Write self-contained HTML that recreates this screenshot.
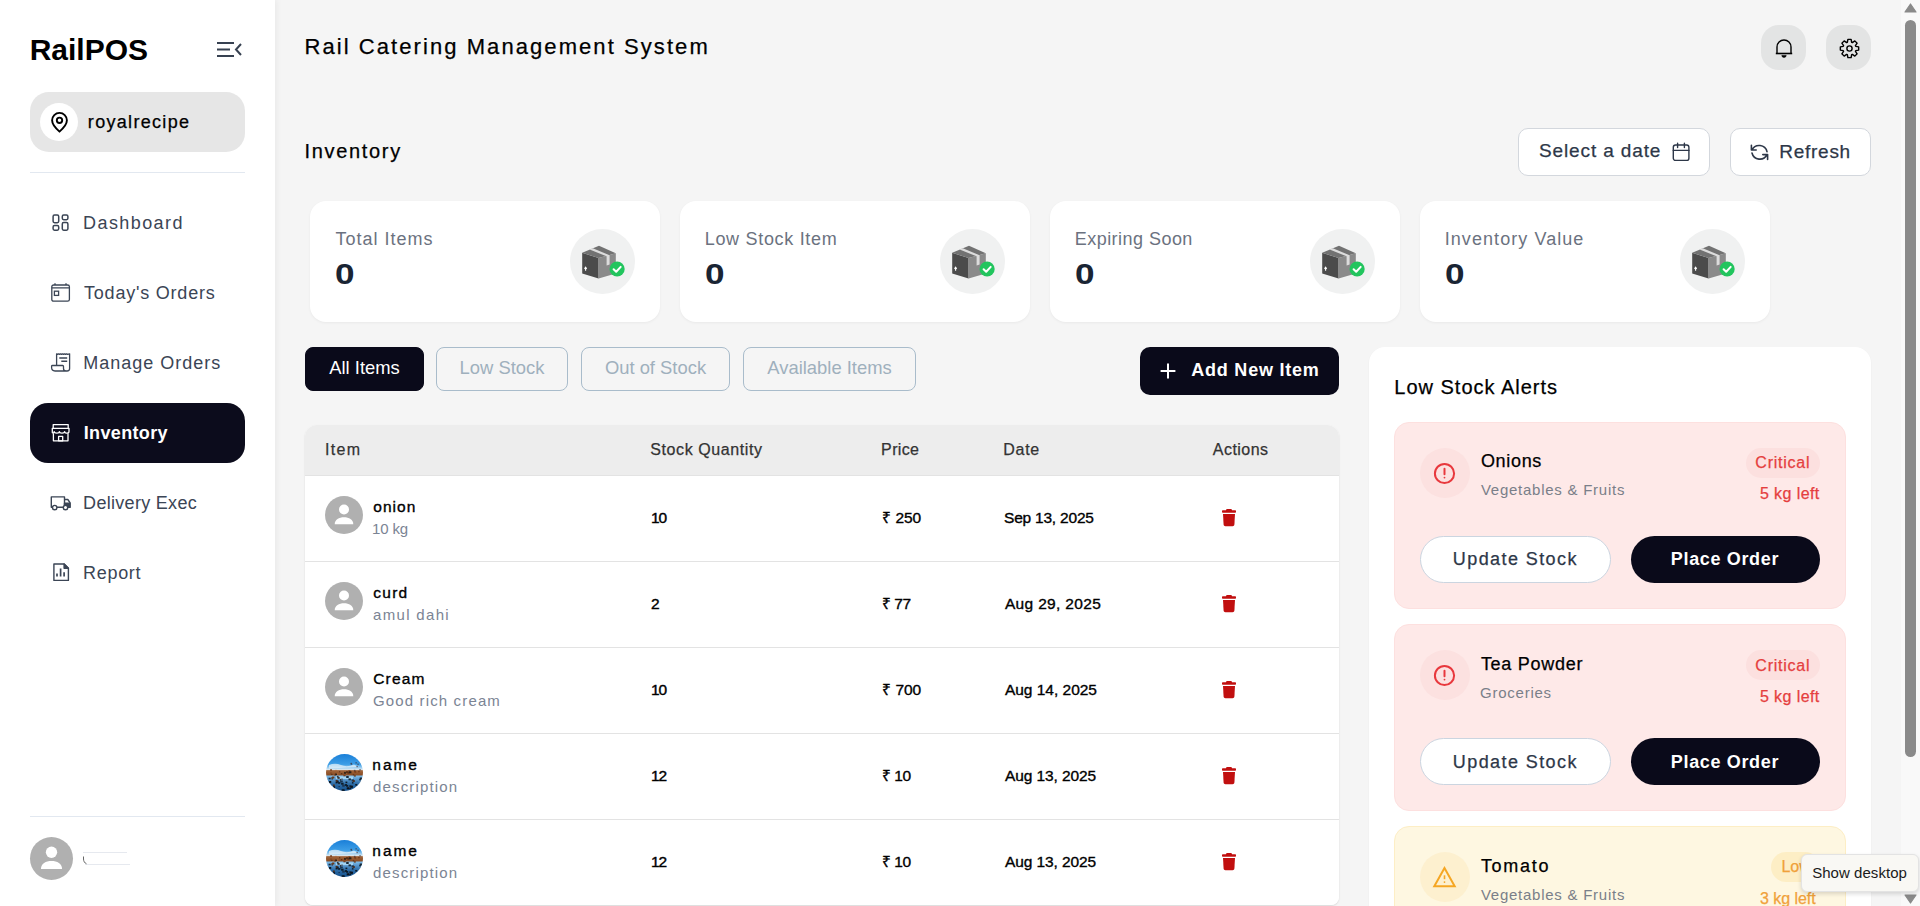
<!DOCTYPE html>
<html><head><meta charset="utf-8"><style>
*{box-sizing:border-box;margin:0;padding:0}
html,body{width:1920px;height:906px;overflow:hidden;background:#f5f5f5;font-family:"Liberation Sans",sans-serif;position:relative}
.abs{position:absolute}
.t{position:absolute;white-space:nowrap;line-height:1}
svg{position:absolute;overflow:visible}
#side{position:absolute;left:0;top:0;width:275px;height:906px;background:#fff;box-shadow:2px 0 6px rgba(0,0,0,0.05)}
.card{position:absolute;top:201px;width:350px;height:121px;background:#fff;border-radius:16px;box-shadow:0 1px 3px rgba(0,0,0,0.05)}
.card .ic{position:absolute;left:260px;top:28px;width:65px;height:65px;border-radius:50%;background:#f0f1f1}
.tab{position:absolute;top:347px;height:44px;border-radius:8px;border:1px solid #a9bccb;color:#9fb0bd;font-size:18.4px;line-height:40px;text-align:center;white-space:nowrap}
.row{position:absolute;left:305px;width:1034px;height:86px;background:#fff;border-top:1px solid #e3e3e3}
.alert{position:absolute;left:1394px;width:452px;height:187px;border-radius:15px}
.ubtn{position:absolute;left:1420px;width:191px;height:47px;border-radius:24px;background:#fff;border:1px solid #cbd5e0}
.pbtn{position:absolute;left:1631px;width:189px;height:47px;border-radius:24px;background:#0a0a1a}
</style></head>
<body>
<div id="side">
<div id="logo" class="t" style="left:29.70px;top:34.86px;font-size:30px;color:#000;font-weight:bold;letter-spacing:0.000px;">RailPOS</div>
<svg style="left:217px;top:41px" width="25" height="17" viewBox="0 0 25 17" fill="none" stroke="#374151" stroke-width="2"><path d="M0 2H17M0 8.5H13M0 15H17M24 3L19 8.5L24 14"/></svg>
<div class="abs" style="left:30px;top:92px;width:215px;height:60px;border-radius:19px;background:#e6e6e6"></div>
<div class="abs" style="left:40px;top:103px;width:38px;height:38px;border-radius:50%;background:#fff"></div>
<svg style="left:50.7px;top:112px" width="17" height="21" viewBox="0 0 17 21" fill="none" stroke="#000" stroke-width="1.9"><path d="M8.5 19.6C8.5 19.6 1.1 13.2 1.1 8.3A7.4 7.4 0 0 1 15.9 8.3C15.9 13.2 8.5 19.6 8.5 19.6Z" stroke-linejoin="miter"/><circle cx="8.5" cy="8.3" r="2.7"/></svg>
<div id="loc" class="t" style="left:87.86px;top:112.76px;font-size:18px;color:#000;font-weight:normal;letter-spacing:1.306px;-webkit-text-stroke:0.25px #000;">royalrecipe</div>
<div class="abs" style="left:30px;top:172px;width:215px;height:1px;background:#e2e8f0"></div>
<svg style="left:52px;top:214px" width="17" height="17" viewBox="0 0 17 17" fill="none" stroke="#3b4555" stroke-width="1.5"><rect x="1.1" y="1.1" width="5.6" height="7.6" rx="1.4"/><rect x="10.3" y="1.1" width="5.6" height="4.6" rx="1.4"/><rect x="1.1" y="11.6" width="5.6" height="4.6" rx="1.4"/><rect x="10.3" y="8.6" width="5.6" height="7.6" rx="1.4"/></svg>
<div id="nav1" class="t" style="left:83.10px;top:214.06px;font-size:18px;color:#3b4555;font-weight:normal;letter-spacing:1.414px;">Dashboard</div>
<svg style="left:51px;top:283px" width="19" height="19" viewBox="0 0 19 19" fill="none" stroke="#3b4555" stroke-width="1.3"><rect x="0.8" y="2" width="17.6" height="16.2" rx="1.8"/><path d="M0.8 4.9H18.4M4 0.2V2M15 0.2V2"/><rect x="3.4" y="8.2" width="4.2" height="4.2"/></svg>
<div id="nav2" class="t" style="left:84.00px;top:283.66px;font-size:18px;color:#3b4555;font-weight:normal;letter-spacing:0.790px;">Today's Orders</div>
<svg style="left:51px;top:353px" width="20" height="19" viewBox="0 0 20 19" fill="none" stroke="#3b4555" stroke-width="1.3" stroke-linejoin="round"><path d="M5.6 12.5V0.8L6.6 1.4L7.6 0.8L8.6 1.4L9.6 0.8L10.6 1.4L11.6 0.8L12.6 1.4L13.6 0.8L14.6 1.4L15.6 0.8L16.6 1.4L18.6 0.8V15.5C18.6 17 17.4 18 16 18H4C2 18 0.6 16.6 0.6 14.6V13.3C0.6 12.8 1 12.5 1.5 12.5H11.6C12.1 12.5 12.5 12.9 12.5 13.4V15.5C12.5 17 13.8 18 15.5 18"/><path d="M8.3 4.9H16.2M10.3 8.3H16.2" stroke-width="1.5"/></svg>
<div id="nav3" class="t" style="left:83.22px;top:353.51px;font-size:18px;color:#3b4555;font-weight:normal;letter-spacing:0.997px;">Manage Orders</div>
<div class="abs" style="left:30px;top:403px;width:215px;height:60px;border-radius:18px;background:#0c0c1c"></div>
<svg style="left:52px;top:424px" width="18" height="18" viewBox="0 0 18 18" fill="none" stroke="#fff" stroke-width="1.3" stroke-linejoin="round"><path d="M1.2 4.3V0.6H16.2V4.3"/><path d="M0.3 4.3H17V7.6C17 8.6 16 9.2 15 9.2C13.8 9.2 12.6 8.4 12.6 7.6C12.6 8.4 11.2 9.2 10 9.2C8.6 9.2 7.4 8.4 7.4 7.6C7.4 8.4 6 9.2 4.8 9.2C3.4 9.2 2.2 8.4 2.2 7.6C2.2 8.6 1.2 9.2 0.3 8.6Z"/><path d="M1.4 9.2V16.8H16V9.2"/><rect x="6.6" y="12.4" width="4.1" height="4.4"/></svg>
<div id="nav4" class="t" style="left:83.77px;top:423.76px;font-size:18px;color:#fff;font-weight:bold;letter-spacing:0.337px;">Inventory</div>
<svg style="left:50px;top:496px" width="21" height="15" viewBox="0 0 21 15" fill="none" stroke="#3b4555" stroke-width="1.4" stroke-linejoin="round"><path d="M1.3 11.2V0.9H14.5V11.2H1.3Z"/><path d="M14.5 3.5H17.8L20 6.6V11.2H14.5"/><rect x="14.5" y="7.2" width="5.5" height="4" fill="#3b4555"/><circle cx="4.7" cy="11.6" r="2.2" fill="#fff"/><circle cx="15.5" cy="11.6" r="2.2" fill="#fff"/></svg>
<div id="nav5" class="t" style="left:83.10px;top:494.06px;font-size:18px;color:#3b4555;font-weight:normal;letter-spacing:0.300px;">Delivery Exec</div>
<svg style="left:52px;top:563px" width="18" height="19" viewBox="0 0 18 19" fill="none" stroke="#3b4555" stroke-width="1.4" stroke-linejoin="round"><path d="M1.9 1H12.1L16.4 5.2V17.4H1.9Z"/><path d="M12.1 1V5.2H16.4Z" fill="#3b4555"/><path d="M5 10.5V13.5M8.6 5.5V13.5M12.1 9.3V13.5" stroke-width="1.7"/></svg>
<div id="nav6" class="t" style="left:83.10px;top:564.16px;font-size:18px;color:#3b4555;font-weight:normal;letter-spacing:0.684px;">Report</div>
<div class="abs" style="left:30px;top:816px;width:215px;height:1px;background:#e2e8f0"></div>
<svg style="left:30px;top:837px" width="43" height="43" viewBox="0 0 38 38">
<circle cx="19" cy="19" r="19" fill="#b0b0b0"/>
<circle cx="19" cy="13.5" r="5" fill="#fff"/>
<path d="M9.7 28.2C9.7 23.5 14 21.2 19 21.2C24 21.2 28.3 23.5 28.3 28.2Z" fill="#fff"/>
</svg>
<div class="abs" style="left:83px;top:852px;width:44px;height:1px;background:#e6e9ef"></div>
<div class="abs" style="left:85px;top:864px;width:45px;height:1px;background:#e6e9ef"></div>
<svg style="left:82px;top:855px" width="6" height="10" viewBox="0 0 6 10" fill="none" stroke="#666" stroke-width="1"><path d="M1.5 1.5V4C1.5 6 2.5 8 4.5 8.8"/></svg>
</div>
<div id="title" class="t" style="left:304.46px;top:35.78px;font-size:22px;color:#000;font-weight:normal;letter-spacing:2.070px;-webkit-text-stroke:0.25px #000;">Rail Catering Management System</div>
<div class="abs" style="left:1761px;top:25px;width:45px;height:45px;border-radius:18px;background:#e3e4e4"></div>
<div class="abs" style="left:1826px;top:25px;width:45px;height:45px;border-radius:18px;background:#e3e4e4"></div>
<svg style="left:1775px;top:39px" width="18" height="19" viewBox="0 0 18 19" fill="none" stroke="#000" stroke-width="1.4"><path d="M2 14.5V8A7 7 0 0 1 16 8V14.5"/><path d="M0.8 14.5H17.2" stroke-width="1.6"/><path d="M6.8 16.4A2.2 2 0 0 0 11.2 16.4Z" fill="#000" stroke-width="0.6"/></svg>
<svg style="left:1838.5px;top:37.5px" width="21" height="21" viewBox="0 0 21 21" fill="none" stroke="#000" stroke-width="1.4" stroke-linejoin="round"><path d="M8.35 4.26 L8.89 1.34 L12.11 1.34 L12.65 4.26 L13.39 4.57 L15.83 2.88 L18.12 5.17 L16.43 7.61 L16.74 8.35 L19.66 8.89 L19.66 12.11 L16.74 12.65 L16.43 13.39 L18.12 15.83 L15.83 18.12 L13.39 16.43 L12.65 16.74 L12.11 19.66 L8.89 19.66 L8.35 16.74 L7.61 16.43 L5.17 18.12 L2.88 15.83 L4.57 13.39 L4.26 12.65 L1.34 12.11 L1.34 8.89 L4.26 8.35 L4.57 7.61 L2.88 5.17 L5.17 2.88 L7.61 4.57Z"/><circle cx="10.5" cy="10.5" r="2.6"/></svg>
<div id="invh" class="t" style="left:304.46px;top:140.97px;font-size:20px;color:#000;font-weight:normal;letter-spacing:1.688px;-webkit-text-stroke:0.25px #000;">Inventory</div>
<div class="abs" style="left:1518px;top:128px;width:192px;height:48px;border-radius:10px;background:#fff;border:1px solid #d3d7dd"></div>
<div id="seld" class="t" style="left:1539.00px;top:141.32px;font-size:19px;color:#2d3748;font-weight:normal;letter-spacing:0.877px;-webkit-text-stroke:0.25px #2d3748;">Select a date</div>
<svg style="left:1672px;top:143px" width="18" height="19" viewBox="0 0 18 19" fill="none" stroke="#2d3748" stroke-width="1.4"><rect x="1.3" y="2" width="15.6" height="15.4" rx="2.2"/><path d="M1.3 7.4H16.9M5.6 0.3V4.5M12.4 0.3V4.5" stroke-linecap="round"/></svg>
<div class="abs" style="left:1730px;top:128px;width:141px;height:48px;border-radius:10px;background:#fff;border:1px solid #d3d7dd"></div>
<svg style="left:1750px;top:143px" width="19" height="19" viewBox="0 0 19 19" fill="none" stroke="#2d3748" stroke-width="1.6" stroke-linecap="round" stroke-linejoin="round"><path d="M1.4 2.2V7H6.2M2 7A8 8 0 0 1 17 8.6M17.6 16.4V11.6H12.8M17 11.6A8 8 0 0 1 2 10"/></svg>
<div id="refr" class="t" style="left:1779.34px;top:141.52px;font-size:19px;color:#2d3748;font-weight:normal;letter-spacing:0.720px;-webkit-text-stroke:0.25px #2d3748;">Refresh</div>
<div class="card" style="left:310px"><div class="ic"></div></div>
<div id="lb0" class="t" style="left:335.62px;top:229.86px;font-size:18px;color:#6b7280;font-weight:normal;letter-spacing:0.990px;">Total Items</div>
<div id="val0" class="t" style="left:334.72px;top:259.21px;font-size:30px;color:#1a2433;font-weight:bold;letter-spacing:0.000px;transform:scaleX(1.17);transform-origin:0 0;">0</div>
<svg style="left:581.9px;top:244.39999999999998px" width="44" height="34" viewBox="0 0 44 34">
<polygon points="0.2,8.8 16.6,14.1 16.6,34.5 0.2,29.4" fill="#4b4b4b"/>
<polygon points="16.6,14.1 33.8,9.3 33.8,29.6 16.6,34.5" fill="#8a8a8a"/>
<polygon points="0.2,8.8 17,1.8 33.8,9.3 16.6,14.1" fill="#727272"/>
<polygon points="7.6,5.6 10.8,4.3 27.6,11.2 27.6,20.5 24.6,21.5 24.6,12.3" fill="#dcdcdc"/>
<path d="M3.6 26.8V23.5M2.5 24.8L3.6 23.3L4.7 24.8" stroke="#fff" stroke-width="1.1" fill="none"/>
<circle cx="35.1" cy="25" r="7.6" fill="#22c55e"/>
<path d="M31.6 25.2L34.2 27.7L38.7 22.9" stroke="#fff" stroke-width="2" fill="none" stroke-linecap="round" stroke-linejoin="round"/>
</svg>
<div class="card" style="left:680px"><div class="ic"></div></div>
<div id="lb1" class="t" style="left:704.72px;top:229.86px;font-size:18px;color:#6b7280;font-weight:normal;letter-spacing:0.692px;">Low Stock Item</div>
<div id="val1" class="t" style="left:704.72px;top:259.21px;font-size:30px;color:#1a2433;font-weight:bold;letter-spacing:0.000px;transform:scaleX(1.17);transform-origin:0 0;">0</div>
<svg style="left:951.9px;top:244.39999999999998px" width="44" height="34" viewBox="0 0 44 34">
<polygon points="0.2,8.8 16.6,14.1 16.6,34.5 0.2,29.4" fill="#4b4b4b"/>
<polygon points="16.6,14.1 33.8,9.3 33.8,29.6 16.6,34.5" fill="#8a8a8a"/>
<polygon points="0.2,8.8 17,1.8 33.8,9.3 16.6,14.1" fill="#727272"/>
<polygon points="7.6,5.6 10.8,4.3 27.6,11.2 27.6,20.5 24.6,21.5 24.6,12.3" fill="#dcdcdc"/>
<path d="M3.6 26.8V23.5M2.5 24.8L3.6 23.3L4.7 24.8" stroke="#fff" stroke-width="1.1" fill="none"/>
<circle cx="35.1" cy="25" r="7.6" fill="#22c55e"/>
<path d="M31.6 25.2L34.2 27.7L38.7 22.9" stroke="#fff" stroke-width="2" fill="none" stroke-linecap="round" stroke-linejoin="round"/>
</svg>
<div class="card" style="left:1050px"><div class="ic"></div></div>
<div id="lb2" class="t" style="left:1074.72px;top:229.86px;font-size:18px;color:#6b7280;font-weight:normal;letter-spacing:0.465px;">Expiring Soon</div>
<div id="val2" class="t" style="left:1074.72px;top:259.21px;font-size:30px;color:#1a2433;font-weight:bold;letter-spacing:0.000px;transform:scaleX(1.17);transform-origin:0 0;">0</div>
<svg style="left:1321.9px;top:244.39999999999998px" width="44" height="34" viewBox="0 0 44 34">
<polygon points="0.2,8.8 16.6,14.1 16.6,34.5 0.2,29.4" fill="#4b4b4b"/>
<polygon points="16.6,14.1 33.8,9.3 33.8,29.6 16.6,34.5" fill="#8a8a8a"/>
<polygon points="0.2,8.8 17,1.8 33.8,9.3 16.6,14.1" fill="#727272"/>
<polygon points="7.6,5.6 10.8,4.3 27.6,11.2 27.6,20.5 24.6,21.5 24.6,12.3" fill="#dcdcdc"/>
<path d="M3.6 26.8V23.5M2.5 24.8L3.6 23.3L4.7 24.8" stroke="#fff" stroke-width="1.1" fill="none"/>
<circle cx="35.1" cy="25" r="7.6" fill="#22c55e"/>
<path d="M31.6 25.2L34.2 27.7L38.7 22.9" stroke="#fff" stroke-width="2" fill="none" stroke-linecap="round" stroke-linejoin="round"/>
</svg>
<div class="card" style="left:1420px"><div class="ic"></div></div>
<div id="lb3" class="t" style="left:1444.72px;top:229.86px;font-size:18px;color:#6b7280;font-weight:normal;letter-spacing:1.064px;">Inventory Value</div>
<div id="val3" class="t" style="left:1444.72px;top:259.21px;font-size:30px;color:#1a2433;font-weight:bold;letter-spacing:0.000px;transform:scaleX(1.17);transform-origin:0 0;">0</div>
<svg style="left:1691.9px;top:244.39999999999998px" width="44" height="34" viewBox="0 0 44 34">
<polygon points="0.2,8.8 16.6,14.1 16.6,34.5 0.2,29.4" fill="#4b4b4b"/>
<polygon points="16.6,14.1 33.8,9.3 33.8,29.6 16.6,34.5" fill="#8a8a8a"/>
<polygon points="0.2,8.8 17,1.8 33.8,9.3 16.6,14.1" fill="#727272"/>
<polygon points="7.6,5.6 10.8,4.3 27.6,11.2 27.6,20.5 24.6,21.5 24.6,12.3" fill="#dcdcdc"/>
<path d="M3.6 26.8V23.5M2.5 24.8L3.6 23.3L4.7 24.8" stroke="#fff" stroke-width="1.1" fill="none"/>
<circle cx="35.1" cy="25" r="7.6" fill="#22c55e"/>
<path d="M31.6 25.2L34.2 27.7L38.7 22.9" stroke="#fff" stroke-width="2" fill="none" stroke-linecap="round" stroke-linejoin="round"/>
</svg>
<div class="tab" style="left:305px;width:119px;background:#0a0a1a;border-color:#0a0a1a;color:#fff">All Items</div>
<div class="tab" style="left:436px;width:132px">Low Stock</div>
<div class="tab" style="left:581px;width:149px">Out of Stock</div>
<div class="tab" style="left:743px;width:173px">Available Items</div>
<div class="abs" style="left:1140px;top:347px;width:199px;height:48px;border-radius:10px;background:#0a0a1a"></div>
<svg style="left:1160px;top:363px" width="16" height="16" viewBox="0 0 16 16" stroke="#fff" stroke-width="2"><path d="M8 0.6V15.4M0.6 8H15.4"/></svg>
<div id="addn" class="t" style="left:1191.26px;top:360.86px;font-size:18px;color:#fff;font-weight:bold;letter-spacing:0.783px;">Add New Item</div>
<div class="abs" style="left:305px;top:425px;width:1034px;height:480px;border-radius:12px 12px 8px 8px;background:#fff;overflow:hidden;box-shadow:0 1px 2px rgba(0,0,0,0.12)"><div class="abs" style="left:0;top:0;width:1034px;height:50px;background:#ededed"></div></div>
<div id="h0" class="t" style="left:325.12px;top:441.66px;font-size:16px;color:#333;font-weight:normal;letter-spacing:1.260px;-webkit-text-stroke:0.25px #333;">Item</div>
<div id="h1" class="t" style="left:650.24px;top:441.66px;font-size:16px;color:#333;font-weight:normal;letter-spacing:0.597px;-webkit-text-stroke:0.25px #333;">Stock Quantity</div>
<div id="h2" class="t" style="left:881.10px;top:441.66px;font-size:16px;color:#333;font-weight:normal;letter-spacing:0.360px;-webkit-text-stroke:0.25px #333;">Price</div>
<div id="h3" class="t" style="left:1003.36px;top:441.66px;font-size:16px;color:#333;font-weight:normal;letter-spacing:0.660px;-webkit-text-stroke:0.25px #333;">Date</div>
<div id="h4" class="t" style="left:1212.76px;top:441.66px;font-size:16px;color:#333;font-weight:normal;letter-spacing:0.480px;-webkit-text-stroke:0.25px #333;">Actions</div>
<div class="row" style="top:475px;"></div>
<svg style="left:325px;top:496px" width="38" height="38" viewBox="0 0 38 38">
<circle cx="19" cy="19" r="19" fill="#b0b0b0"/>
<circle cx="19" cy="13.5" r="5" fill="#fff"/>
<path d="M9.7 28.2C9.7 23.5 14 21.2 19 21.2C24 21.2 28.3 23.5 28.3 28.2Z" fill="#fff"/>
</svg>
<div id="r0n" class="t" style="left:373.26px;top:498.78px;font-size:15.5px;color:#000;font-weight:normal;letter-spacing:1.043px;-webkit-text-stroke:0.35px #000;">onion</div>
<div id="r0d" class="t" style="left:372.10px;top:521.10px;font-size:15px;color:#7b8494;font-weight:normal;letter-spacing:-0.180px;">10 kg</div>
<div id="r0q" class="t" style="left:651.00px;top:509.88px;font-size:15.5px;color:#000;font-weight:normal;letter-spacing:-1.000px;-webkit-text-stroke:0.4px #000;">10</div>
<div id="r0p" class="t" style="left:882.26px;top:509.88px;font-size:15.5px;color:#000;font-weight:normal;letter-spacing:-0.086px;-webkit-text-stroke:0.35px #000;">&#8377; 250</div>
<div id="r0t" class="t" style="left:1004.00px;top:509.88px;font-size:15.5px;color:#000;font-weight:normal;letter-spacing:-0.210px;-webkit-text-stroke:0.35px #000;">Sep 13, 2025</div>
<svg style="left:1222px;top:509px" width="14" height="18" viewBox="0 0 14 18">
<path d="M4.3 0.4C4.5 0 4.9 0 5.2 0H8.8C9.1 0 9.5 0 9.7 0.4L10.1 1.2H13.3C13.7 1.2 14 1.5 14 2V3.1C14 3.5 13.7 3.8 13.3 3.8H0.7C0.3 3.8 0 3.5 0 3.1V2C0 1.5 0.3 1.2 0.7 1.2H3.9Z" fill="#c10f0f"/>
<path d="M1 4.9H13L12.4 15.6C12.3 16.6 11.6 17.3 10.6 17.3H3.4C2.4 17.3 1.7 16.6 1.6 15.6Z" fill="#c10f0f"/>
</svg>
<div class="row" style="top:561px;"></div>
<svg style="left:325px;top:582px" width="38" height="38" viewBox="0 0 38 38">
<circle cx="19" cy="19" r="19" fill="#b0b0b0"/>
<circle cx="19" cy="13.5" r="5" fill="#fff"/>
<path d="M9.7 28.2C9.7 23.5 14 21.2 19 21.2C24 21.2 28.3 23.5 28.3 28.2Z" fill="#fff"/>
</svg>
<div id="r1n" class="t" style="left:373.26px;top:584.78px;font-size:15.5px;color:#000;font-weight:normal;letter-spacing:1.260px;-webkit-text-stroke:0.35px #000;">curd</div>
<div id="r1d" class="t" style="left:373.00px;top:607.10px;font-size:15px;color:#7b8494;font-weight:normal;letter-spacing:1.329px;">amul dahi</div>
<div id="r1q" class="t" style="left:651.00px;top:595.88px;font-size:15.5px;color:#000;font-weight:normal;letter-spacing:0.000px;-webkit-text-stroke:0.4px #000;">2</div>
<div id="r1p" class="t" style="left:882.26px;top:595.88px;font-size:15.5px;color:#000;font-weight:normal;letter-spacing:-0.600px;-webkit-text-stroke:0.35px #000;">&#8377; 77</div>
<div id="r1t" class="t" style="left:1004.90px;top:595.88px;font-size:15.5px;color:#000;font-weight:normal;letter-spacing:0.338px;-webkit-text-stroke:0.35px #000;">Aug 29, 2025</div>
<svg style="left:1222px;top:595px" width="14" height="18" viewBox="0 0 14 18">
<path d="M4.3 0.4C4.5 0 4.9 0 5.2 0H8.8C9.1 0 9.5 0 9.7 0.4L10.1 1.2H13.3C13.7 1.2 14 1.5 14 2V3.1C14 3.5 13.7 3.8 13.3 3.8H0.7C0.3 3.8 0 3.5 0 3.1V2C0 1.5 0.3 1.2 0.7 1.2H3.9Z" fill="#c10f0f"/>
<path d="M1 4.9H13L12.4 15.6C12.3 16.6 11.6 17.3 10.6 17.3H3.4C2.4 17.3 1.7 16.6 1.6 15.6Z" fill="#c10f0f"/>
</svg>
<div class="row" style="top:647px;"></div>
<svg style="left:325px;top:668px" width="38" height="38" viewBox="0 0 38 38">
<circle cx="19" cy="19" r="19" fill="#b0b0b0"/>
<circle cx="19" cy="13.5" r="5" fill="#fff"/>
<path d="M9.7 28.2C9.7 23.5 14 21.2 19 21.2C24 21.2 28.3 23.5 28.3 28.2Z" fill="#fff"/>
</svg>
<div id="r2n" class="t" style="left:373.26px;top:670.78px;font-size:15.5px;color:#000;font-weight:normal;letter-spacing:1.178px;-webkit-text-stroke:0.35px #000;">Cream</div>
<div id="r2d" class="t" style="left:373.00px;top:693.10px;font-size:15px;color:#7b8494;font-weight:normal;letter-spacing:1.142px;">Good rich cream</div>
<div id="r2q" class="t" style="left:651.00px;top:681.88px;font-size:15.5px;color:#000;font-weight:normal;letter-spacing:-1.000px;-webkit-text-stroke:0.4px #000;">10</div>
<div id="r2p" class="t" style="left:882.26px;top:681.88px;font-size:15.5px;color:#000;font-weight:normal;letter-spacing:-0.090px;-webkit-text-stroke:0.35px #000;">&#8377; 700</div>
<div id="r2t" class="t" style="left:1004.90px;top:681.88px;font-size:15.5px;color:#000;font-weight:normal;letter-spacing:-0.011px;-webkit-text-stroke:0.35px #000;">Aug 14, 2025</div>
<svg style="left:1222px;top:681px" width="14" height="18" viewBox="0 0 14 18">
<path d="M4.3 0.4C4.5 0 4.9 0 5.2 0H8.8C9.1 0 9.5 0 9.7 0.4L10.1 1.2H13.3C13.7 1.2 14 1.5 14 2V3.1C14 3.5 13.7 3.8 13.3 3.8H0.7C0.3 3.8 0 3.5 0 3.1V2C0 1.5 0.3 1.2 0.7 1.2H3.9Z" fill="#c10f0f"/>
<path d="M1 4.9H13L12.4 15.6C12.3 16.6 11.6 17.3 10.6 17.3H3.4C2.4 17.3 1.7 16.6 1.6 15.6Z" fill="#c10f0f"/>
</svg>
<div class="row" style="top:733px;"></div>
<svg style="left:325.5px;top:754px" width="37" height="37" viewBox="0 0 37 37">
<defs><clipPath id="cp754"><circle cx="18.5" cy="18.5" r="18.5"/></clipPath>
<linearGradient id="sk754" x1="0" y1="0" x2="0" y2="1">
<stop offset="0" stop-color="#1a7fd8"/><stop offset="0.28" stop-color="#3d9ee6"/><stop offset="0.38" stop-color="#a9d4f2"/><stop offset="0.42" stop-color="#d8e6ee"/>
<stop offset="0.45" stop-color="#a0643a"/><stop offset="0.56" stop-color="#8a4e26"/><stop offset="0.6" stop-color="#7ab8e6"/><stop offset="0.68" stop-color="#5b9ad0"/>
<stop offset="0.8" stop-color="#2f6ea8"/><stop offset="1" stop-color="#15508c"/></linearGradient></defs>
<g clip-path="url(#cp754)"><rect width="37" height="37" fill="url(#sk754)"/>
<path d="M3 11Q9 8.5 15 11T28 10.5L33 13L3 14.5Z" fill="#e6f1f8" opacity="0.75"/>
<rect x="10" y="22.5" width="17" height="2.6" fill="#a8d8f6" opacity="0.9"/>
<rect x="13.0" y="17.3" width="1.3" height="1.0" fill="#5a2e14"/><rect x="20.2" y="22.0" width="2.5" height="2.0" fill="#1a2a38"/><rect x="9.3" y="15.9" width="1.3" height="1.0" fill="#b06a3a"/><rect x="5.1" y="23.3" width="1.4" height="1.1" fill="#6a3a1a"/><rect x="9.6" y="27.8" width="2.0" height="1.6" fill="#0e1c2a"/><rect x="15.5" y="35.5" width="2.0" height="1.6" fill="#0e1c2a"/><rect x="6.5" y="23.2" width="1.4" height="1.1" fill="#6a3a1a"/><rect x="12.5" y="32.0" width="1.3" height="1.1" fill="#1b3550"/><rect x="21.4" y="18.1" width="2.0" height="1.6" fill="#5a2e14"/><rect x="4.1" y="15.3" width="1.9" height="1.5" fill="#7a3f1c"/><rect x="20.1" y="31.1" width="2.0" height="1.6" fill="#0a1420"/><rect x="17.4" y="20.6" width="2.2" height="1.7" fill="#7a3f1c"/><rect x="10.3" y="26.6" width="2.4" height="1.9" fill="#0a1420"/><rect x="26.8" y="20.3" width="1.4" height="1.1" fill="#5a2e14"/><rect x="16.2" y="30.7" width="2.5" height="2.0" fill="#1b3550"/><rect x="16.3" y="35.2" width="2.3" height="1.8" fill="#0e1c2a"/><rect x="21.5" y="33.3" width="1.7" height="1.3" fill="#4a2e1e"/><rect x="13.9" y="24.9" width="1.3" height="1.0" fill="#3a2a20"/><rect x="5.2" y="19.9" width="1.3" height="1.0" fill="#5a2e14"/><rect x="25.9" y="28.2" width="1.6" height="1.3" fill="#0a1420"/><rect x="15.1" y="28.7" width="2.5" height="2.0" fill="#0e1c2a"/><rect x="14.1" y="27.4" width="1.3" height="1.0" fill="#0a1420"/><rect x="28.1" y="16.8" width="1.8" height="1.4" fill="#7a3f1c"/><rect x="33.2" y="24.9" width="1.8" height="1.5" fill="#1a2a38"/><rect x="20.7" y="33.4" width="2.4" height="1.9" fill="#0a1420"/><rect x="11.5" y="23.1" width="2.2" height="1.7" fill="#3a2a20"/><rect x="14.9" y="19.1" width="1.4" height="1.2" fill="#5a2e14"/><rect x="9.9" y="19.1" width="2.4" height="1.9" fill="#b06a3a"/><rect x="8.2" y="20.2" width="1.8" height="1.4" fill="#7a3f1c"/><rect x="14.6" y="26.5" width="2.2" height="1.7" fill="#1b3550"/><rect x="19.5" y="27.6" width="1.8" height="1.5" fill="#0e1c2a"/><rect x="31.6" y="34.9" width="1.8" height="1.4" fill="#0a1420"/><rect x="15.4" y="24.6" width="1.3" height="1.0" fill="#3a2a20"/><rect x="4.3" y="18.6" width="1.4" height="1.1" fill="#7a3f1c"/><rect x="22.4" y="16.3" width="2.0" height="1.6" fill="#7a3f1c"/><rect x="34.3" y="27.5" width="2.4" height="1.9" fill="#0e1c2a"/><rect x="22.9" y="17.3" width="2.5" height="2.0" fill="#2b2218"/><rect x="22.5" y="24.4" width="2.4" height="1.9" fill="#1a2a38"/><rect x="35.8" y="24.3" width="1.6" height="1.3" fill="#3a2a20"/><rect x="6.9" y="30.5" width="1.9" height="1.5" fill="#4a2e1e"/><rect x="25.5" y="25.4" width="2.5" height="2.0" fill="#1b3550"/><rect x="20.0" y="17.2" width="2.3" height="1.8" fill="#5a2e14"/><rect x="12.1" y="28.1" width="2.2" height="1.7" fill="#0e1c2a"/><rect x="10.9" y="22.1" width="1.7" height="1.4" fill="#1a2a38"/><rect x="9.6" y="25.9" width="2.1" height="1.7" fill="#4a2e1e"/><rect x="22.8" y="31.3" width="2.3" height="1.9" fill="#1b3550"/><rect x="29.8" y="30.3" width="1.5" height="1.2" fill="#1b3550"/><rect x="18.8" y="30.1" width="2.3" height="1.8" fill="#0e1c2a"/><rect x="18.1" y="18.3" width="1.8" height="1.5" fill="#2b2218"/><rect x="33.9" y="35.7" width="1.3" height="1.1" fill="#4a2e1e"/><rect x="5.5" y="24.3" width="1.5" height="1.2" fill="#3a2a20"/><rect x="23.2" y="33.8" width="1.9" height="1.5" fill="#0e1c2a"/><rect x="24.2" y="31.6" width="2.4" height="1.9" fill="#0e1c2a"/><rect x="6.1" y="22.5" width="2.3" height="1.8" fill="#6a3a1a"/><rect x="18.3" y="17.9" width="1.3" height="1.1" fill="#2b2218"/><rect x="34.2" y="29.9" width="1.8" height="1.4" fill="#0a1420"/><rect x="34.2" y="29.9" width="2.6" height="2.1" fill="#1b3550"/><rect x="2.9" y="27.0" width="2.3" height="1.9" fill="#0a1420"/><rect x="7.0" y="32.2" width="2.1" height="1.7" fill="#0a1420"/><rect x="13.9" y="26.1" width="1.2" height="1.0" fill="#1b3550"/><rect x="29.2" y="30.0" width="1.9" height="1.5" fill="#0e1c2a"/><rect x="33.7" y="23.5" width="2.4" height="1.9" fill="#1a2a38"/><rect x="9.2" y="19.5" width="1.9" height="1.5" fill="#2b2218"/><rect x="28.0" y="21.2" width="1.8" height="1.4" fill="#6a3a1a"/><rect x="6.5" y="34.0" width="2.5" height="2.0" fill="#4a2e1e"/><rect x="24.5" y="31.9" width="2.4" height="1.9" fill="#0a1420"/><rect x="31.9" y="16.9" width="1.9" height="1.5" fill="#7a3f1c"/><rect x="2.6" y="23.7" width="2.1" height="1.6" fill="#1a2a38"/><rect x="28.4" y="17.3" width="1.9" height="1.5" fill="#7a3f1c"/><rect x="26.7" y="26.2" width="2.2" height="1.7" fill="#4a2e1e"/><rect x="30.4" y="11.9" width="1.5" height="1.3" fill="#3a3a4a" opacity="0.7"/><rect x="33.3" y="15.1" width="1.5" height="1.3" fill="#3a3a4a" opacity="0.7"/><rect x="24.7" y="9.5" width="1.5" height="1.3" fill="#3a3a4a" opacity="0.7"/><rect x="24.5" y="8.8" width="1.5" height="1.3" fill="#3a3a4a" opacity="0.7"/><rect x="29.4" y="8.2" width="1.5" height="1.3" fill="#3a3a4a" opacity="0.7"/><rect x="34.7" y="8.5" width="1.5" height="1.3" fill="#3a3a4a" opacity="0.7"/><rect x="27.9" y="15.8" width="1.5" height="1.3" fill="#3a3a4a" opacity="0.7"/><rect x="31.3" y="9.6" width="1.5" height="1.3" fill="#3a3a4a" opacity="0.7"/>
</g></svg>
<div id="r3n" class="t" style="left:372.36px;top:756.78px;font-size:15.5px;color:#000;font-weight:normal;letter-spacing:1.920px;-webkit-text-stroke:0.35px #000;">name</div>
<div id="r3d" class="t" style="left:373.00px;top:779.10px;font-size:15px;color:#7b8494;font-weight:normal;letter-spacing:1.162px;">description</div>
<div id="r3q" class="t" style="left:651.00px;top:767.88px;font-size:15.5px;color:#000;font-weight:normal;letter-spacing:-1.000px;-webkit-text-stroke:0.4px #000;">12</div>
<div id="r3p" class="t" style="left:882.26px;top:767.88px;font-size:15.5px;color:#000;font-weight:normal;letter-spacing:-0.600px;-webkit-text-stroke:0.35px #000;">&#8377; 10</div>
<div id="r3t" class="t" style="left:1004.90px;top:767.88px;font-size:15.5px;color:#000;font-weight:normal;letter-spacing:-0.081px;-webkit-text-stroke:0.35px #000;">Aug 13, 2025</div>
<svg style="left:1222px;top:767px" width="14" height="18" viewBox="0 0 14 18">
<path d="M4.3 0.4C4.5 0 4.9 0 5.2 0H8.8C9.1 0 9.5 0 9.7 0.4L10.1 1.2H13.3C13.7 1.2 14 1.5 14 2V3.1C14 3.5 13.7 3.8 13.3 3.8H0.7C0.3 3.8 0 3.5 0 3.1V2C0 1.5 0.3 1.2 0.7 1.2H3.9Z" fill="#c10f0f"/>
<path d="M1 4.9H13L12.4 15.6C12.3 16.6 11.6 17.3 10.6 17.3H3.4C2.4 17.3 1.7 16.6 1.6 15.6Z" fill="#c10f0f"/>
</svg>
<div class="row" style="top:819px;border-radius:0 0 8px 8px;"></div>
<svg style="left:325.5px;top:840px" width="37" height="37" viewBox="0 0 37 37">
<defs><clipPath id="cp840"><circle cx="18.5" cy="18.5" r="18.5"/></clipPath>
<linearGradient id="sk840" x1="0" y1="0" x2="0" y2="1">
<stop offset="0" stop-color="#1a7fd8"/><stop offset="0.28" stop-color="#3d9ee6"/><stop offset="0.38" stop-color="#a9d4f2"/><stop offset="0.42" stop-color="#d8e6ee"/>
<stop offset="0.45" stop-color="#a0643a"/><stop offset="0.56" stop-color="#8a4e26"/><stop offset="0.6" stop-color="#7ab8e6"/><stop offset="0.68" stop-color="#5b9ad0"/>
<stop offset="0.8" stop-color="#2f6ea8"/><stop offset="1" stop-color="#15508c"/></linearGradient></defs>
<g clip-path="url(#cp840)"><rect width="37" height="37" fill="url(#sk840)"/>
<path d="M3 11Q9 8.5 15 11T28 10.5L33 13L3 14.5Z" fill="#e6f1f8" opacity="0.75"/>
<rect x="10" y="22.5" width="17" height="2.6" fill="#a8d8f6" opacity="0.9"/>
<rect x="13.0" y="17.3" width="1.3" height="1.0" fill="#5a2e14"/><rect x="20.2" y="22.0" width="2.5" height="2.0" fill="#1a2a38"/><rect x="9.3" y="15.9" width="1.3" height="1.0" fill="#b06a3a"/><rect x="5.1" y="23.3" width="1.4" height="1.1" fill="#6a3a1a"/><rect x="9.6" y="27.8" width="2.0" height="1.6" fill="#0e1c2a"/><rect x="15.5" y="35.5" width="2.0" height="1.6" fill="#0e1c2a"/><rect x="6.5" y="23.2" width="1.4" height="1.1" fill="#6a3a1a"/><rect x="12.5" y="32.0" width="1.3" height="1.1" fill="#1b3550"/><rect x="21.4" y="18.1" width="2.0" height="1.6" fill="#5a2e14"/><rect x="4.1" y="15.3" width="1.9" height="1.5" fill="#7a3f1c"/><rect x="20.1" y="31.1" width="2.0" height="1.6" fill="#0a1420"/><rect x="17.4" y="20.6" width="2.2" height="1.7" fill="#7a3f1c"/><rect x="10.3" y="26.6" width="2.4" height="1.9" fill="#0a1420"/><rect x="26.8" y="20.3" width="1.4" height="1.1" fill="#5a2e14"/><rect x="16.2" y="30.7" width="2.5" height="2.0" fill="#1b3550"/><rect x="16.3" y="35.2" width="2.3" height="1.8" fill="#0e1c2a"/><rect x="21.5" y="33.3" width="1.7" height="1.3" fill="#4a2e1e"/><rect x="13.9" y="24.9" width="1.3" height="1.0" fill="#3a2a20"/><rect x="5.2" y="19.9" width="1.3" height="1.0" fill="#5a2e14"/><rect x="25.9" y="28.2" width="1.6" height="1.3" fill="#0a1420"/><rect x="15.1" y="28.7" width="2.5" height="2.0" fill="#0e1c2a"/><rect x="14.1" y="27.4" width="1.3" height="1.0" fill="#0a1420"/><rect x="28.1" y="16.8" width="1.8" height="1.4" fill="#7a3f1c"/><rect x="33.2" y="24.9" width="1.8" height="1.5" fill="#1a2a38"/><rect x="20.7" y="33.4" width="2.4" height="1.9" fill="#0a1420"/><rect x="11.5" y="23.1" width="2.2" height="1.7" fill="#3a2a20"/><rect x="14.9" y="19.1" width="1.4" height="1.2" fill="#5a2e14"/><rect x="9.9" y="19.1" width="2.4" height="1.9" fill="#b06a3a"/><rect x="8.2" y="20.2" width="1.8" height="1.4" fill="#7a3f1c"/><rect x="14.6" y="26.5" width="2.2" height="1.7" fill="#1b3550"/><rect x="19.5" y="27.6" width="1.8" height="1.5" fill="#0e1c2a"/><rect x="31.6" y="34.9" width="1.8" height="1.4" fill="#0a1420"/><rect x="15.4" y="24.6" width="1.3" height="1.0" fill="#3a2a20"/><rect x="4.3" y="18.6" width="1.4" height="1.1" fill="#7a3f1c"/><rect x="22.4" y="16.3" width="2.0" height="1.6" fill="#7a3f1c"/><rect x="34.3" y="27.5" width="2.4" height="1.9" fill="#0e1c2a"/><rect x="22.9" y="17.3" width="2.5" height="2.0" fill="#2b2218"/><rect x="22.5" y="24.4" width="2.4" height="1.9" fill="#1a2a38"/><rect x="35.8" y="24.3" width="1.6" height="1.3" fill="#3a2a20"/><rect x="6.9" y="30.5" width="1.9" height="1.5" fill="#4a2e1e"/><rect x="25.5" y="25.4" width="2.5" height="2.0" fill="#1b3550"/><rect x="20.0" y="17.2" width="2.3" height="1.8" fill="#5a2e14"/><rect x="12.1" y="28.1" width="2.2" height="1.7" fill="#0e1c2a"/><rect x="10.9" y="22.1" width="1.7" height="1.4" fill="#1a2a38"/><rect x="9.6" y="25.9" width="2.1" height="1.7" fill="#4a2e1e"/><rect x="22.8" y="31.3" width="2.3" height="1.9" fill="#1b3550"/><rect x="29.8" y="30.3" width="1.5" height="1.2" fill="#1b3550"/><rect x="18.8" y="30.1" width="2.3" height="1.8" fill="#0e1c2a"/><rect x="18.1" y="18.3" width="1.8" height="1.5" fill="#2b2218"/><rect x="33.9" y="35.7" width="1.3" height="1.1" fill="#4a2e1e"/><rect x="5.5" y="24.3" width="1.5" height="1.2" fill="#3a2a20"/><rect x="23.2" y="33.8" width="1.9" height="1.5" fill="#0e1c2a"/><rect x="24.2" y="31.6" width="2.4" height="1.9" fill="#0e1c2a"/><rect x="6.1" y="22.5" width="2.3" height="1.8" fill="#6a3a1a"/><rect x="18.3" y="17.9" width="1.3" height="1.1" fill="#2b2218"/><rect x="34.2" y="29.9" width="1.8" height="1.4" fill="#0a1420"/><rect x="34.2" y="29.9" width="2.6" height="2.1" fill="#1b3550"/><rect x="2.9" y="27.0" width="2.3" height="1.9" fill="#0a1420"/><rect x="7.0" y="32.2" width="2.1" height="1.7" fill="#0a1420"/><rect x="13.9" y="26.1" width="1.2" height="1.0" fill="#1b3550"/><rect x="29.2" y="30.0" width="1.9" height="1.5" fill="#0e1c2a"/><rect x="33.7" y="23.5" width="2.4" height="1.9" fill="#1a2a38"/><rect x="9.2" y="19.5" width="1.9" height="1.5" fill="#2b2218"/><rect x="28.0" y="21.2" width="1.8" height="1.4" fill="#6a3a1a"/><rect x="6.5" y="34.0" width="2.5" height="2.0" fill="#4a2e1e"/><rect x="24.5" y="31.9" width="2.4" height="1.9" fill="#0a1420"/><rect x="31.9" y="16.9" width="1.9" height="1.5" fill="#7a3f1c"/><rect x="2.6" y="23.7" width="2.1" height="1.6" fill="#1a2a38"/><rect x="28.4" y="17.3" width="1.9" height="1.5" fill="#7a3f1c"/><rect x="26.7" y="26.2" width="2.2" height="1.7" fill="#4a2e1e"/><rect x="30.4" y="11.9" width="1.5" height="1.3" fill="#3a3a4a" opacity="0.7"/><rect x="33.3" y="15.1" width="1.5" height="1.3" fill="#3a3a4a" opacity="0.7"/><rect x="24.7" y="9.5" width="1.5" height="1.3" fill="#3a3a4a" opacity="0.7"/><rect x="24.5" y="8.8" width="1.5" height="1.3" fill="#3a3a4a" opacity="0.7"/><rect x="29.4" y="8.2" width="1.5" height="1.3" fill="#3a3a4a" opacity="0.7"/><rect x="34.7" y="8.5" width="1.5" height="1.3" fill="#3a3a4a" opacity="0.7"/><rect x="27.9" y="15.8" width="1.5" height="1.3" fill="#3a3a4a" opacity="0.7"/><rect x="31.3" y="9.6" width="1.5" height="1.3" fill="#3a3a4a" opacity="0.7"/>
</g></svg>
<div id="r4n" class="t" style="left:372.36px;top:842.78px;font-size:15.5px;color:#000;font-weight:normal;letter-spacing:1.920px;-webkit-text-stroke:0.35px #000;">name</div>
<div id="r4d" class="t" style="left:373.00px;top:865.10px;font-size:15px;color:#7b8494;font-weight:normal;letter-spacing:1.162px;">description</div>
<div id="r4q" class="t" style="left:651.00px;top:853.88px;font-size:15.5px;color:#000;font-weight:normal;letter-spacing:-1.000px;-webkit-text-stroke:0.4px #000;">12</div>
<div id="r4p" class="t" style="left:882.26px;top:853.88px;font-size:15.5px;color:#000;font-weight:normal;letter-spacing:-0.600px;-webkit-text-stroke:0.35px #000;">&#8377; 10</div>
<div id="r4t" class="t" style="left:1004.90px;top:853.88px;font-size:15.5px;color:#000;font-weight:normal;letter-spacing:-0.081px;-webkit-text-stroke:0.35px #000;">Aug 13, 2025</div>
<svg style="left:1222px;top:853px" width="14" height="18" viewBox="0 0 14 18">
<path d="M4.3 0.4C4.5 0 4.9 0 5.2 0H8.8C9.1 0 9.5 0 9.7 0.4L10.1 1.2H13.3C13.7 1.2 14 1.5 14 2V3.1C14 3.5 13.7 3.8 13.3 3.8H0.7C0.3 3.8 0 3.5 0 3.1V2C0 1.5 0.3 1.2 0.7 1.2H3.9Z" fill="#c10f0f"/>
<path d="M1 4.9H13L12.4 15.6C12.3 16.6 11.6 17.3 10.6 17.3H3.4C2.4 17.3 1.7 16.6 1.6 15.6Z" fill="#c10f0f"/>
</svg>
<div class="abs" style="left:1369px;top:347px;width:502px;height:600px;border-radius:16px;background:#fff;box-shadow:0 1px 2px rgba(0,0,0,0.05)"></div>
<div id="lsa" class="t" style="left:1394.36px;top:377.07px;font-size:20px;color:#000;font-weight:normal;letter-spacing:0.984px;-webkit-text-stroke:0.25px #000;">Low Stock Alerts</div>
<div class="alert" style="top:422px;background:#fee9e8;border:1px solid #fde0df"></div>
<div class="abs" style="left:1420px;top:448px;width:50px;height:50px;border-radius:50%;background:#fce1e0"></div>
<svg style="left:1433px;top:462px" width="23" height="23" viewBox="0 0 23 23" fill="none" stroke="#e8383d" stroke-width="2"><circle cx="11.5" cy="11.5" r="9.6"/><path d="M11.5 6.7V12.2" stroke-linecap="round"/><circle cx="11.5" cy="15.6" r="0.9" fill="#e8383d" stroke="none"/></svg>
<div id="a0n" class="t" style="left:1480.88px;top:451.51px;font-size:18px;color:#000;font-weight:normal;letter-spacing:0.684px;-webkit-text-stroke:0.25px #000;">Onions</div>
<div id="a0c" class="t" style="left:1480.88px;top:482.00px;font-size:15px;color:#7a7f89;font-weight:normal;letter-spacing:0.750px;">Vegetables &amp; Fruits</div>
<div class="abs" style="left:1746px;top:448px;width:74px;height:30px;border-radius:15px;background:#fce0df"></div>
<div id="a0b" class="t" style="left:1755.36px;top:455.26px;font-size:16px;color:#e53e3e;font-weight:normal;letter-spacing:0.750px;-webkit-text-stroke:0.25px #e53e3e;">Critical</div>
<div id="a0l" class="t" style="left:1759.88px;top:485.56px;font-size:16px;color:#e53e3e;font-weight:normal;letter-spacing:0.424px;-webkit-text-stroke:0.25px #e53e3e;">5 kg left</div>
<div class="ubtn" style="top:536px"></div>
<div id="a0u" class="t" style="left:1452.87px;top:549.76px;font-size:18px;color:#2d3748;font-weight:normal;letter-spacing:1.409px;-webkit-text-stroke:0.25px #2d3748;">Update Stock</div>
<div class="pbtn" style="top:536px"></div>
<div id="a0p" class="t" style="left:1670.86px;top:549.76px;font-size:18px;color:#fff;font-weight:bold;letter-spacing:0.648px;">Place Order</div>
<div class="alert" style="top:624px;background:#fee9e8;border:1px solid #fde0df"></div>
<div class="abs" style="left:1420px;top:650px;width:50px;height:50px;border-radius:50%;background:#fce1e0"></div>
<svg style="left:1433px;top:664px" width="23" height="23" viewBox="0 0 23 23" fill="none" stroke="#e8383d" stroke-width="2"><circle cx="11.5" cy="11.5" r="9.6"/><path d="M11.5 6.7V12.2" stroke-linecap="round"/><circle cx="11.5" cy="15.6" r="0.9" fill="#e8383d" stroke="none"/></svg>
<div id="a1n" class="t" style="left:1480.88px;top:654.51px;font-size:18px;color:#000;font-weight:normal;letter-spacing:0.720px;-webkit-text-stroke:0.25px #000;">Tea Powder</div>
<div id="a1c" class="t" style="left:1479.98px;top:685.00px;font-size:15px;color:#7a7f89;font-weight:normal;letter-spacing:0.763px;">Groceries</div>
<div class="abs" style="left:1746px;top:650px;width:74px;height:30px;border-radius:15px;background:#fce0df"></div>
<div id="a1b" class="t" style="left:1755.36px;top:658.26px;font-size:16px;color:#e53e3e;font-weight:normal;letter-spacing:0.750px;-webkit-text-stroke:0.25px #e53e3e;">Critical</div>
<div id="a1l" class="t" style="left:1759.88px;top:688.56px;font-size:16px;color:#e53e3e;font-weight:normal;letter-spacing:0.424px;-webkit-text-stroke:0.25px #e53e3e;">5 kg left</div>
<div class="ubtn" style="top:738px"></div>
<div id="a1u" class="t" style="left:1452.87px;top:752.76px;font-size:18px;color:#2d3748;font-weight:normal;letter-spacing:1.409px;-webkit-text-stroke:0.25px #2d3748;">Update Stock</div>
<div class="pbtn" style="top:738px"></div>
<div id="a1p" class="t" style="left:1670.86px;top:752.76px;font-size:18px;color:#fff;font-weight:bold;letter-spacing:0.648px;">Place Order</div>
<div class="alert" style="top:826px;background:#fef7e1;border:1px solid #fdeec5"></div>
<div class="abs" style="left:1420px;top:852px;width:50px;height:50px;border-radius:50%;background:#fdf0cf"></div>
<svg style="left:1432px;top:866px" width="25" height="22" viewBox="0 0 25 22" fill="none" stroke="#f5a623" stroke-width="2" stroke-linejoin="miter"><path d="M12.5 2L2.3 20.3H22.7Z"/><path d="M12.5 9.3V13.2" stroke-width="1.6"/><circle cx="12.5" cy="16.1" r="0.9" fill="#f5a623" stroke="none"/></svg>
<div id="a2n" class="t" style="left:1480.88px;top:856.51px;font-size:18px;color:#000;font-weight:normal;letter-spacing:1.728px;-webkit-text-stroke:0.25px #000;">Tomato</div>
<div id="a2c" class="t" style="left:1480.88px;top:887.00px;font-size:15px;color:#7a7f89;font-weight:normal;letter-spacing:0.750px;">Vegetables &amp; Fruits</div>
<div class="abs" style="left:1771px;top:852px;width:49px;height:30px;border-radius:15px;background:#fdeec5"></div>
<div id="a2b" class="t" style="left:1781.40px;top:859.46px;font-size:16px;color:#f0a13a;font-weight:normal;letter-spacing:0.000px;-webkit-text-stroke:0.25px #f0a13a;">Low</div>
<div id="a2l" class="t" style="left:1759.88px;top:890.56px;font-size:16px;color:#f0a13a;font-weight:normal;letter-spacing:-0.026px;-webkit-text-stroke:0.25px #f0a13a;">3 kg left</div>
<div class="ubtn" style="top:940px"></div>
<div id="a2u" class="t" style="left:1453.75px;top:954.76px;font-size:18px;color:#2d3748;font-weight:normal;letter-spacing:0.000px;-webkit-text-stroke:0.25px #2d3748;">Update Stock</div>
<div class="pbtn" style="top:940px"></div>
<div id="a2p" class="t" style="left:1671.40px;top:954.76px;font-size:18px;color:#fff;font-weight:bold;letter-spacing:0.000px;">Place Order</div>
<div class="abs" style="left:1901px;top:0;width:19px;height:906px;background:#f9f9f9"></div>
<div class="abs" style="left:1905px;top:20px;width:11px;height:737px;border-radius:5.5px;background:#8a8a8a"></div>
<svg style="left:1904px;top:3px" width="13" height="10" viewBox="0 0 13 10"><path d="M6.5 1L12 9H1Z" fill="#8a8a8a" stroke="#8a8a8a" stroke-width="1.2" stroke-linejoin="round"/></svg>
<svg style="left:1904px;top:894px" width="13" height="10" viewBox="0 0 13 10"><path d="M6.5 9L12 1H1Z" fill="#8a8a8a" stroke="#8a8a8a" stroke-width="1.2" stroke-linejoin="round"/></svg>
<div class="abs" style="left:1801px;top:854px;width:118px;height:38px;border-radius:6px;background:#f9f8f4;border:1px solid #e3e3e3;box-shadow:0 2px 4px rgba(0,0,0,0.14)"></div>
<div id="tip" class="t" style="left:1812.16px;top:865.30px;font-size:15px;color:#1a1a1a;font-weight:normal;letter-spacing:0.044px;">Show desktop</div>
</body></html>
